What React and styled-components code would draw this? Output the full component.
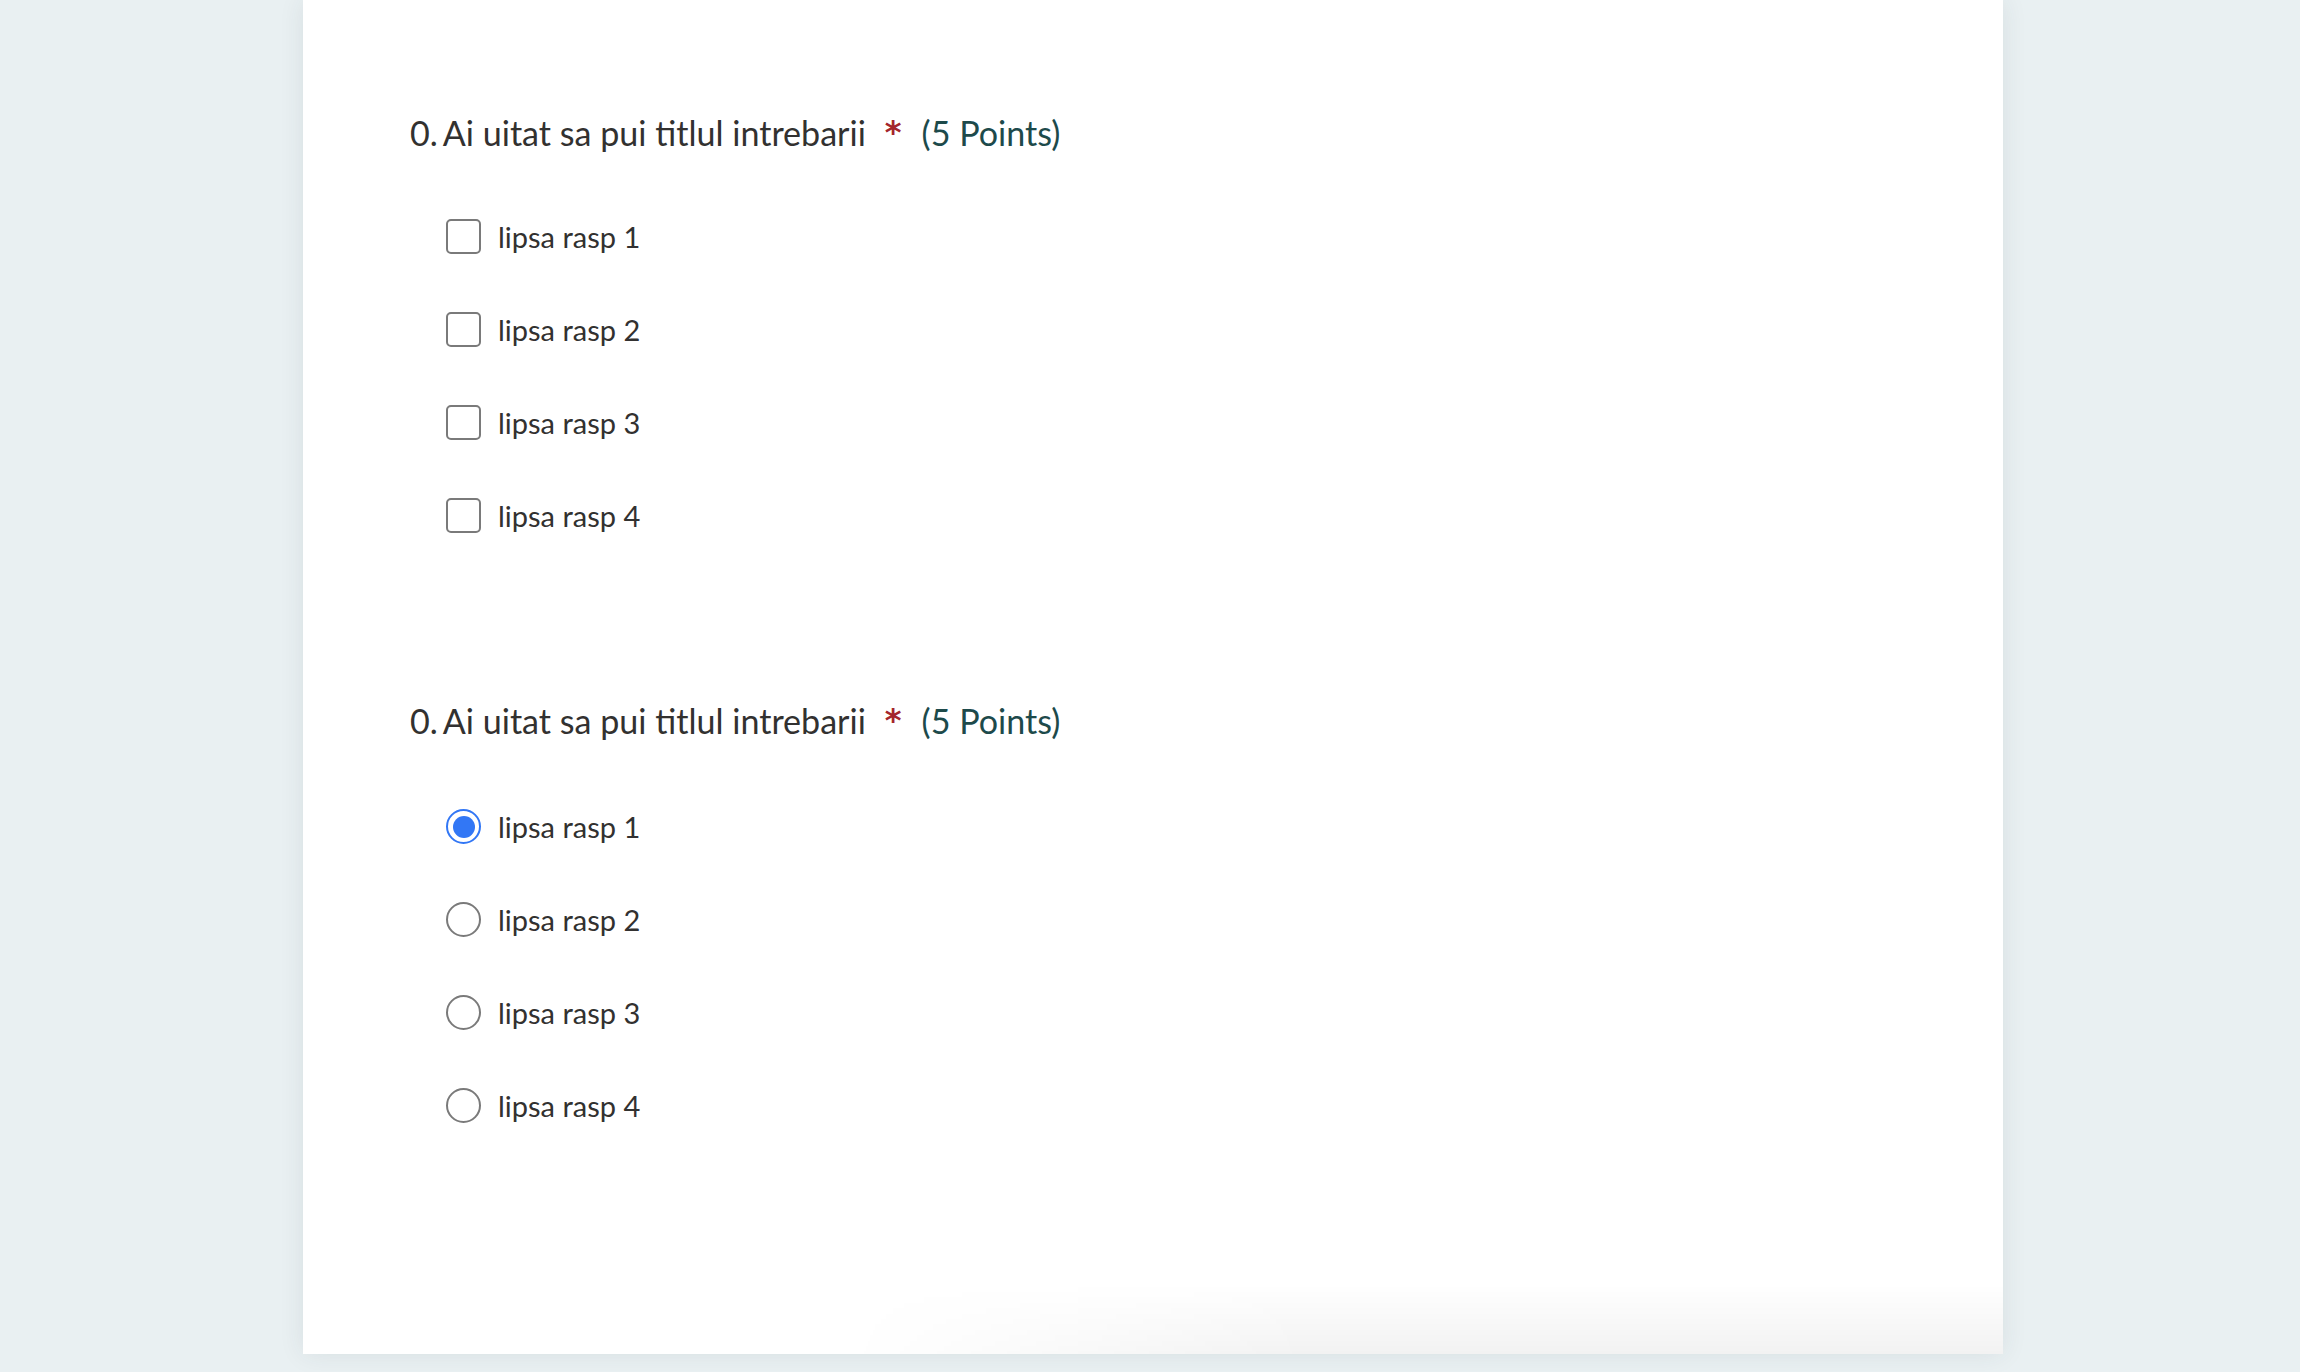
import React from "react";
import styled, { createGlobalStyle } from "styled-components";

const GlobalStyle = createGlobalStyle`
  html, body {
    margin: 0;
    padding: 0;
    background: #e9f0f2;
  }
  body {
    font-family: Lato, "Noto Sans", sans-serif;
    color: #323130;
  }
`;

const Page = styled.div`
  min-height: 1372px;
  padding-left: 303px;
  box-sizing: border-box;
  overflow: hidden;
`;

const Card = styled.main`
  position: relative;
  width: 1700px;
  min-height: 1354px;
  box-sizing: border-box;
  padding: 111px 0 0 107px;
  background: #ffffff;
  box-shadow: 0 0 24px rgba(40, 60, 70, 0.09);
  display: flex;
  flex-direction: column;
  gap: 166px;

  /* soft shade that sits on the lower right of the card */
  &::after {
    content: "";
    position: absolute;
    left: 32%;
    right: 0;
    bottom: 0;
    height: 70px;
    background: linear-gradient(to bottom, rgba(0, 0, 0, 0), rgba(0, 0, 0, 0.05));
    -webkit-mask-image: linear-gradient(to right, transparent, #000 40%);
    mask-image: linear-gradient(to right, transparent, #000 40%);
    box-shadow: 0 12px 14px -4px rgba(60, 80, 90, 0.22);
    pointer-events: none;
  }
`;

const Question = styled.section`
  display: flex;
  flex-direction: column;
  gap: ${(p) => p.$gap}px;
`;

const Title = styled.h2`
  margin: 0;
  font-size: 34.1px;
  font-weight: 400;
  line-height: 44px;
  color: #323130;
  display: flex;
  align-items: baseline;
`;

const Number = styled.span`
  margin-right: 5px;
`;

const Required = styled.span`
  position: relative;
  top: -3px;
  font-family: "DejaVu Sans", sans-serif;
  font-weight: 700;
  font-size: 32px;
  color: #a4262c;
  margin: 0 20px 0 19px;
`;

const Points = styled.span`
  color: #1d4a4b;
`;

const Options = styled.div`
  display: flex;
  flex-direction: column;
  gap: 58px;
  padding-left: 36px;
`;

const Option = styled.label`
  display: flex;
  align-items: center;
  gap: 17px;
  height: 35px;
  font-size: 29px;
  line-height: 35px;
  color: #323130;
`;

const OptionText = styled.span`
  position: relative;
  top: 0;
`;

const Box = styled.span`
  width: 35px;
  height: 35px;
  box-sizing: border-box;
  border: 2px solid #7a7a7a;
  border-radius: 5px;
  flex-shrink: 0;
`;

const Radio = styled.span`
  width: 35px;
  height: 35px;
  box-sizing: border-box;
  border-radius: 50%;
  border: 2.5px solid ${(p) => (p.$checked ? "#3277f5" : "#7a7a7a")};
  flex-shrink: 0;
  display: flex;
  align-items: center;
  justify-content: center;

  &::before {
    content: "";
    width: 22px;
    height: 22px;
    border-radius: 50%;
    background: ${(p) => (p.$checked ? "#3277f5" : "transparent")};
  }
`;

const answers = ["lipsa rasp 1", "lipsa rasp 2", "lipsa rasp 3", "lipsa rasp 4"];

function QuestionTitle() {
  return (
    <Title>
      <Number>0.</Number>
      <span>Ai uitat sa pui titlul intrebarii</span>
      <Required>*</Required>
      <Points>(5 Points)</Points>
    </Title>
  );
}

export default function App() {
  return (
    <Page>
      <GlobalStyle />
      <Card>
        <Question $gap={62}>
          <QuestionTitle />
          <Options>
            {answers.map((a) => (
              <Option key={a}>
                <Box />
                <OptionText>{a}</OptionText>
              </Option>
            ))}
          </Options>
        </Question>
        <Question $gap={64}>
          <QuestionTitle />
          <Options>
            {answers.map((a, i) => (
              <Option key={a}>
                <Radio $checked={i === 0} />
                <OptionText>{a}</OptionText>
              </Option>
            ))}
          </Options>
        </Question>
      </Card>
    </Page>
  );
}
